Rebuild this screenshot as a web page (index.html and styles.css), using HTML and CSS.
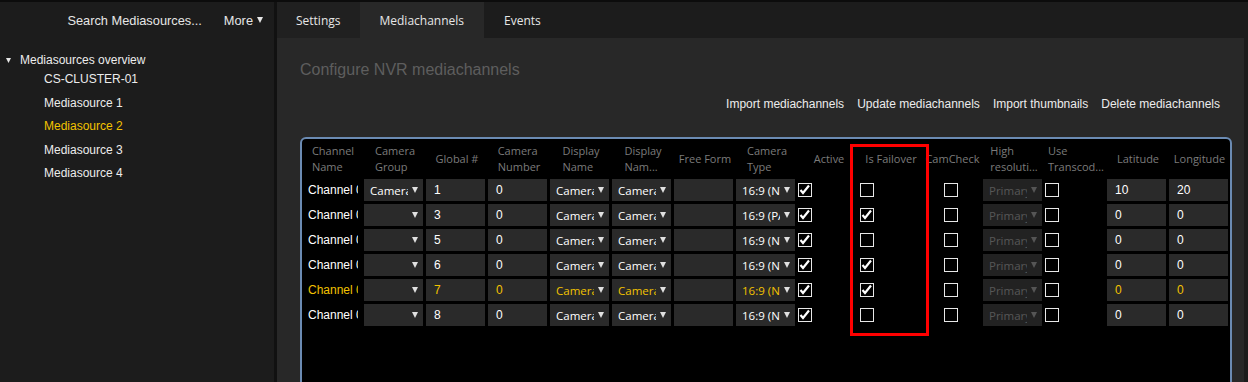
FILE: index.html
```html
<!DOCTYPE html>
<html lang="en">
<head>
<meta charset="utf-8">
<title>Mediachannels</title>
<link rel="stylesheet" href="styles.css">
</head>
<body>
<div class="app">
  <aside class="sidebar">
    <div class="side-top">
      <span class="search">Search Mediasources...</span>
      <span class="more">More <svg class="tri" viewBox="0 0 6 6"><path d="M0 0H6L3 6Z"/></svg></span>
    </div>
    <div class="tree">
      <div class="tree-root"><svg class="caret" viewBox="0 0 6 6"><path d="M0 0H6L3 6Z"/></svg><span>Mediasources overview</span></div>
      <ul class="tree-children">
        <li>CS-CLUSTER-01</li>
        <li>Mediasource 1</li>
        <li class="selected">Mediasource 2</li>
        <li>Mediasource 3</li>
        <li>Mediasource 4</li>
      </ul>
    </div>
  </aside>
  <main class="main">
    <nav class="tabs">
      <div class="tab">Settings</div>
      <div class="tab active">Mediachannels</div>
      <div class="tab plain">Events</div>
    </nav>
    <section class="panel">
      <h1 class="title">Configure NVR mediachannels</h1>
      <div class="actions">
        <span>Import mediachannels</span>
        <span>Update mediachannels</span>
        <span>Import thumbnails</span>
        <span>Delete mediachannels</span>
      </div>
      <div class="grid">
        <div class="hrow">
          <div class="h"><span>Channel<br>Name</span></div>
          <div class="h"><span>Camera<br>Group</span></div>
          <div class="h"><span>Global #</span></div>
          <div class="h"><span>Camera<br>Number</span></div>
          <div class="h"><span>Display<br>Name</span></div>
          <div class="h"><span>Display<br>Nam...</span></div>
          <div class="h"><span>Free Form</span></div>
          <div class="h"><span>Camera<br>Type</span></div>
          <div class="h"><span>Active</span></div>
          <div class="h"><span>Is Failover</span></div>
          <div class="h"><span>CamCheck</span></div>
          <div class="h"><span>High<br>resoluti...</span></div>
          <div class="h"><span>Use<br>Transcod...</span></div>
          <div class="h"><span>Latitude</span></div>
          <div class="h"><span>Longitude</span></div>
        </div>

        <div class="row">
          <div class="name">Channel 01</div>
          <div class="sel"><span class="v">Camera group 1</span><svg class="dd" viewBox="0 0 6 6"><path d="M0 0H6L3 6Z"/></svg></div>
          <div class="inp">1</div>
          <div class="inp">0</div>
          <div class="sel"><span class="v">Camera 1</span><svg class="dd" viewBox="0 0 6 6"><path d="M0 0H6L3 6Z"/></svg></div>
          <div class="sel"><span class="v">Camera 1</span><svg class="dd" viewBox="0 0 6 6"><path d="M0 0H6L3 6Z"/></svg></div>
          <div class="inp"></div>
          <div class="sel"><span class="v">16:9 (NTSC)</span><svg class="dd" viewBox="0 0 6 6"><path d="M0 0H6L3 6Z"/></svg></div>
          <div class="chk"><svg class="tick" viewBox="0 0 12 12"><path d="M1.5 6L4 9L10 1.5"/></svg></div>
          <div class="chk"></div>
          <div class="chk cc"></div>
          <div class="sel dis"><span class="v">Primary</span><svg class="dd" viewBox="0 0 6 6"><path d="M0 0H6L3 6Z"/></svg></div>
          <div class="chk"></div>
          <div class="inp">10</div>
          <div class="inp">20</div>
        </div>

        <div class="row">
          <div class="name">Channel 03</div>
          <div class="sel"><span class="v"></span><svg class="dd" viewBox="0 0 6 6"><path d="M0 0H6L3 6Z"/></svg></div>
          <div class="inp">3</div>
          <div class="inp">0</div>
          <div class="sel"><span class="v">Camera 3</span><svg class="dd" viewBox="0 0 6 6"><path d="M0 0H6L3 6Z"/></svg></div>
          <div class="sel"><span class="v">Camera 3</span><svg class="dd" viewBox="0 0 6 6"><path d="M0 0H6L3 6Z"/></svg></div>
          <div class="inp"></div>
          <div class="sel"><span class="v">16:9 (PAL)</span><svg class="dd" viewBox="0 0 6 6"><path d="M0 0H6L3 6Z"/></svg></div>
          <div class="chk"><svg class="tick" viewBox="0 0 12 12"><path d="M1.5 6L4 9L10 1.5"/></svg></div>
          <div class="chk"><svg class="tick" viewBox="0 0 12 12"><path d="M1.5 6L4 9L10 1.5"/></svg></div>
          <div class="chk cc"></div>
          <div class="sel dis"><span class="v">Primary</span><svg class="dd" viewBox="0 0 6 6"><path d="M0 0H6L3 6Z"/></svg></div>
          <div class="chk"></div>
          <div class="inp">0</div>
          <div class="inp">0</div>
        </div>

        <div class="row">
          <div class="name">Channel 05</div>
          <div class="sel"><span class="v"></span><svg class="dd" viewBox="0 0 6 6"><path d="M0 0H6L3 6Z"/></svg></div>
          <div class="inp">5</div>
          <div class="inp">0</div>
          <div class="sel"><span class="v">Camera 5</span><svg class="dd" viewBox="0 0 6 6"><path d="M0 0H6L3 6Z"/></svg></div>
          <div class="sel"><span class="v">Camera 5</span><svg class="dd" viewBox="0 0 6 6"><path d="M0 0H6L3 6Z"/></svg></div>
          <div class="inp"></div>
          <div class="sel"><span class="v">16:9 (NTSC)</span><svg class="dd" viewBox="0 0 6 6"><path d="M0 0H6L3 6Z"/></svg></div>
          <div class="chk"><svg class="tick" viewBox="0 0 12 12"><path d="M1.5 6L4 9L10 1.5"/></svg></div>
          <div class="chk"></div>
          <div class="chk cc"></div>
          <div class="sel dis"><span class="v">Primary</span><svg class="dd" viewBox="0 0 6 6"><path d="M0 0H6L3 6Z"/></svg></div>
          <div class="chk"></div>
          <div class="inp">0</div>
          <div class="inp">0</div>
        </div>

        <div class="row">
          <div class="name">Channel 06</div>
          <div class="sel"><span class="v"></span><svg class="dd" viewBox="0 0 6 6"><path d="M0 0H6L3 6Z"/></svg></div>
          <div class="inp">6</div>
          <div class="inp">0</div>
          <div class="sel"><span class="v">Camera 6</span><svg class="dd" viewBox="0 0 6 6"><path d="M0 0H6L3 6Z"/></svg></div>
          <div class="sel"><span class="v">Camera 6</span><svg class="dd" viewBox="0 0 6 6"><path d="M0 0H6L3 6Z"/></svg></div>
          <div class="inp"></div>
          <div class="sel"><span class="v">16:9 (NTSC)</span><svg class="dd" viewBox="0 0 6 6"><path d="M0 0H6L3 6Z"/></svg></div>
          <div class="chk"><svg class="tick" viewBox="0 0 12 12"><path d="M1.5 6L4 9L10 1.5"/></svg></div>
          <div class="chk"><svg class="tick" viewBox="0 0 12 12"><path d="M1.5 6L4 9L10 1.5"/></svg></div>
          <div class="chk cc"></div>
          <div class="sel dis"><span class="v">Primary</span><svg class="dd" viewBox="0 0 6 6"><path d="M0 0H6L3 6Z"/></svg></div>
          <div class="chk"></div>
          <div class="inp">0</div>
          <div class="inp">0</div>
        </div>

        <div class="row hl">
          <div class="name">Channel 07</div>
          <div class="sel"><span class="v"></span><svg class="dd" viewBox="0 0 6 6"><path d="M0 0H6L3 6Z"/></svg></div>
          <div class="inp">7</div>
          <div class="inp">0</div>
          <div class="sel"><span class="v">Camera 7</span><svg class="dd" viewBox="0 0 6 6"><path d="M0 0H6L3 6Z"/></svg></div>
          <div class="sel"><span class="v">Camera 7</span><svg class="dd" viewBox="0 0 6 6"><path d="M0 0H6L3 6Z"/></svg></div>
          <div class="inp"></div>
          <div class="sel"><span class="v">16:9 (NTSC)</span><svg class="dd" viewBox="0 0 6 6"><path d="M0 0H6L3 6Z"/></svg></div>
          <div class="chk"><svg class="tick" viewBox="0 0 12 12"><path d="M1.5 6L4 9L10 1.5"/></svg></div>
          <div class="chk"><svg class="tick" viewBox="0 0 12 12"><path d="M1.5 6L4 9L10 1.5"/></svg></div>
          <div class="chk cc"></div>
          <div class="sel dis"><span class="v">Primary</span><svg class="dd" viewBox="0 0 6 6"><path d="M0 0H6L3 6Z"/></svg></div>
          <div class="chk"></div>
          <div class="inp">0</div>
          <div class="inp">0</div>
        </div>

        <div class="row">
          <div class="name">Channel 08</div>
          <div class="sel"><span class="v"></span><svg class="dd" viewBox="0 0 6 6"><path d="M0 0H6L3 6Z"/></svg></div>
          <div class="inp">8</div>
          <div class="inp">0</div>
          <div class="sel"><span class="v">Camera 8</span><svg class="dd" viewBox="0 0 6 6"><path d="M0 0H6L3 6Z"/></svg></div>
          <div class="sel"><span class="v">Camera 8</span><svg class="dd" viewBox="0 0 6 6"><path d="M0 0H6L3 6Z"/></svg></div>
          <div class="inp"></div>
          <div class="sel"><span class="v">16:9 (NTSC)</span><svg class="dd" viewBox="0 0 6 6"><path d="M0 0H6L3 6Z"/></svg></div>
          <div class="chk"><svg class="tick" viewBox="0 0 12 12"><path d="M1.5 6L4 9L10 1.5"/></svg></div>
          <div class="chk"></div>
          <div class="chk cc"></div>
          <div class="sel dis"><span class="v">Primary</span><svg class="dd" viewBox="0 0 6 6"><path d="M0 0H6L3 6Z"/></svg></div>
          <div class="chk"></div>
          <div class="inp">0</div>
          <div class="inp">0</div>
        </div>

        <div class="highlight"></div>
      </div>
    </section>
  </main>
</div>
</body>
</html>
```

FILE: styles.css
```css
html, body {
  margin: 0;
  padding: 0;
}
body {
  background: #1c1c1c;
  height: 382px;
  overflow: hidden;
  font-family: "Liberation Sans", Arial, sans-serif;
  border-top: 2px solid #0c0c0c;
  box-sizing: border-box;
}
.app {
  display: flex;
  height: 380px;
}

/* sidebar */
.sidebar {
  width: 277px;
  flex: none;
  box-sizing: border-box;
  border-right: 3px solid #111111;
  background: #1c1c1c;
}
.side-top {
  height: 36px;
  display: flex;
  align-items: center;
  justify-content: flex-end;
  gap: 22px;
  padding-right: 11px;
  color: #e6e6e6;
  font-size: 12.8px;
}
.more {
  display: flex;
  align-items: center;
  gap: 4px;
}
.tri {
  width: 6px;
  height: 6px;
  fill: #e6e6e6;
}
.tree {
  padding-top: 14px;
  font-size: 12px;
  color: #ececec;
}
.tree-root {
  display: flex;
  align-items: center;
  height: 16px;
  padding-left: 6px;
}
.caret {
  width: 5px;
  height: 5px;
  fill: #e6e6e6;
  margin-right: 9px;
}
.tree-children {
  list-style: none;
  margin: 0;
  padding: 0 0 0 44px;
}
.tree-children li {
  line-height: 23.5px;
}
.tree-children .selected {
  color: #f2c200;
}

/* main */
.main {
  flex: 1;
  min-width: 0;
  display: flex;
  flex-direction: column;
}
.tabs {
  height: 36px;
  flex: none;
  display: flex;
  font-family: "Open Sans", sans-serif;
  font-size: 12px;
  color: #e6e6e6;
}
.tab {
  display: flex;
  align-items: center;
  padding: 0 19px;
  background: #202020;
}
.tab.active {
  background: #282828;
  padding: 0 20px;
}
.tab.plain {
  background: transparent;
  padding-left: 20px;
}
.panel {
  flex: 1;
  background: #282828;
  margin-right: 4px;
  padding: 22px 23px 0;
}
.title {
  margin: 0;
  font-size: 16px;
  font-weight: normal;
  line-height: 20px;
  color: #5e5e5e;
}
.actions {
  margin-top: 16px;
  display: flex;
  justify-content: flex-end;
  gap: 13px;
  padding-right: 1px;
  font-size: 12px;
  line-height: 16px;
  color: #ececec;
}

/* grid */
.grid {
  position: relative;
  margin-top: 25px;
  width: 932px;
  height: 260px;
  box-sizing: border-box;
  border: 2px solid #6b8bb3;
  border-radius: 6px;
  background: #000;
}
.hrow, .row {
  display: grid;
  grid-template-columns: 62px 62px 62px 62px 62px 62px 62px 62px 62px 62px 61px 62px 62px 62px 61px;
  align-items: center;
}
.hrow {
  height: 40px;
  font-family: "Open Sans", sans-serif;
  font-size: 11px;
  line-height: 16px;
  color: #7b7b7b;
}
.h {
  display: flex;
  justify-content: center;
  white-space: nowrap;
}
.row {
  height: 22px;
  margin-bottom: 3px;
  font-size: 12px;
  color: #ffffff;
}
.row.hl {
  color: #f2c200;
}
.name {
  padding-left: 6px;
  width: 50px;
  overflow: hidden;
  white-space: nowrap;
}
.inp {
  width: 59px;
  height: 22px;
  box-sizing: border-box;
  background: #2a2a2a;
  padding-left: 8px;
  line-height: 22px;
}
.sel {
  width: 59px;
  height: 22px;
  box-sizing: border-box;
  background: #2a2a2a;
  display: flex;
  align-items: center;
  padding: 0 5px 0 6px;
  font-family: "Open Sans", sans-serif;
  font-size: 11.5px;
}
.sel .v {
  flex: 1;
  min-width: 0;
  overflow: hidden;
  white-space: nowrap;
}
.dd {
  width: 6px;
  height: 6px;
  flex: none;
  margin-left: 4px;
  fill: #e0e0e0;
}
.sel.dis {
  background: #222222;
  color: #575757;
}
.sel.dis .dd {
  fill: #555555;
}
.chk {
  width: 14px;
  height: 14px;
  box-sizing: border-box;
  border: 1px solid #e8e8e8;
  background: #000;
}
.chk.cc {
  margin-left: 22px;
}
.tick {
  display: block;
  width: 12px;
  height: 12px;
  fill: none;
  stroke: #ffffff;
  stroke-width: 2.2;
}
.highlight {
  position: absolute;
  left: 548px;
  top: 5px;
  width: 79px;
  height: 192px;
  box-sizing: border-box;
  border: 3px solid #ff0000;
}
```
